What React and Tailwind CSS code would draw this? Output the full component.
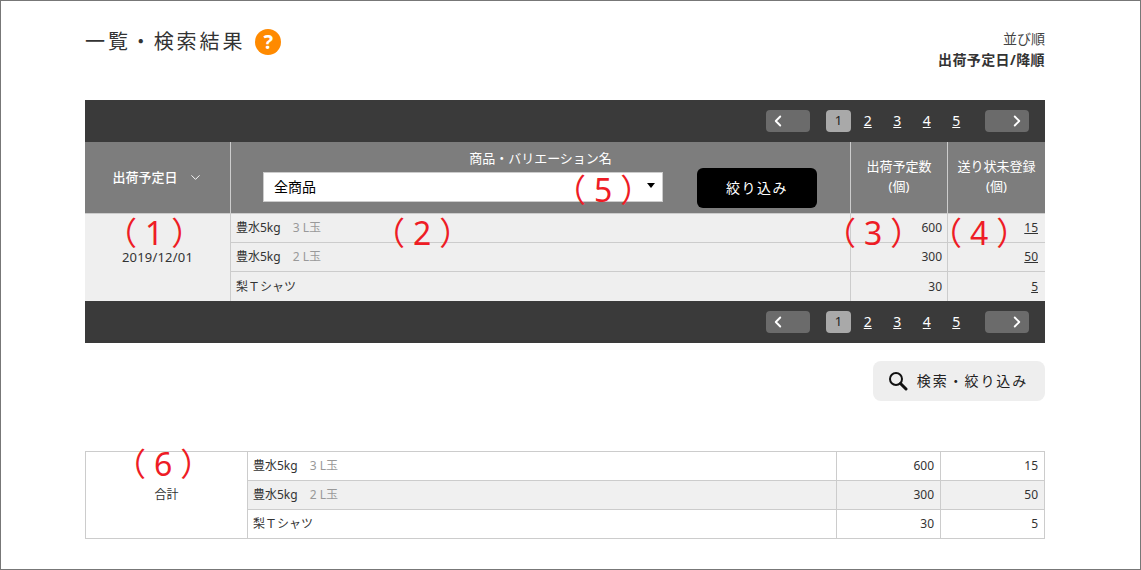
import { ChevronDown, ChevronLeft, ChevronRight } from 'lucide-react';

const font = "font-['Noto_Sans','Noto_Sans_CJK_JP',sans-serif]";

const rows = [
  { name: '豊水5kg', variant: '3 L玉', qty: '600', pending: '15' },
  { name: '豊水5kg', variant: '2 L玉', qty: '300', pending: '50' },
  { name: '梨Ｔシャツ', variant: '', qty: '30', pending: '5' },
];

// red annotation numbers laid over the screenshot
const Note = ({ className, children }) => (
  <span className={`absolute text-[32px] leading-none tracking-[8px] whitespace-nowrap text-[#ee1c25] ${className}`}>
    （{children}）
  </span>
);

const Pager = () => (
  <div className="h-[42px] bg-[#3a3a3a] flex items-center justify-end pr-4">
    <button className="w-11 h-[22px] rounded bg-[#6b6b6b] flex items-center pl-[3px] text-white">
      <ChevronLeft size={18} strokeWidth={2.5} />
    </button>
    <div className="w-[25px] h-[22px] ml-4 mr-[2px] rounded bg-[#a9a9a9] flex items-center justify-center text-[13px] text-[#222]">1</div>
    {['2', '3', '4', '5'].map((n) => (
      <a key={n} className="w-[29.5px] text-center text-sm leading-none text-white underline">{n}</a>
    ))}
    <button className="w-11 h-[22px] ml-[14px] rounded bg-[#6b6b6b] flex items-center justify-end pr-[3px] text-white">
      <ChevronRight size={18} strokeWidth={2.5} />
    </button>
  </div>
);

const App = () => {
  return (
    <div className={`${font} relative w-[1141px] h-[570px] border border-[#777] bg-white text-[#333] overflow-hidden`}>
      <div className="w-[960px] ml-[84px]">
        <div className="h-[99px] flex justify-between">
          <div className="flex items-start pt-[27px]">
            <h1 className="text-[20px] leading-7 tracking-[2.9px] font-normal text-[#333]">一覧・検索結果</h1>
            <span className="w-[26px] h-[26px] ml-[10px] mt-[1px] rounded-full bg-[#ff8a00] flex items-center justify-center text-white text-[20px] font-bold">?</span>
          </div>
          <div className="pt-7 text-right">
            <div className="text-sm leading-[19px] text-[#444]">並び順</div>
            <div className="text-sm leading-[23px] tracking-[0.4px] font-bold text-[#333]">出荷予定日/降順</div>
          </div>
        </div>

        <Pager />

        <div className="h-[72px] flex bg-[#7d7d7d] text-white text-[13px] border-b border-[#ccc]">
          <div className="w-[146px] flex items-center justify-center gap-[10px] border-r border-[#ccc] font-medium">
            出荷予定日
            <ChevronDown size={15} strokeWidth={1.5} />
          </div>
          <div className="w-[620px] border-r border-[#ccc] pt-[7px]">
            <div className="text-center leading-[18px]">商品・バリエーション名</div>
            <div className="flex items-start">
              <div className="w-[400px] h-[30px] ml-[32px] mt-[5px] bg-white border border-[#ccc] flex items-center justify-between pl-[10px] pr-[7px] text-sm text-black">
                全商品
                <span className="w-0 h-0 mb-1 border-x-4 border-t-[5px] border-x-transparent border-t-black"></span>
              </div>
              <button className="w-[120px] h-10 ml-[34px] mt-[1px] rounded-md bg-black text-white text-sm tracking-[1.5px] flex items-center justify-center">絞り込み</button>
            </div>
          </div>
          <div className="w-[97px] border-r border-[#ccc] text-center pt-[14px] leading-5">
            <div>出荷予定数</div>
            <div>(個)</div>
          </div>
          <div className="w-[97px] text-center pt-[14px] leading-5">
            <div>送り状未登録</div>
            <div>(個)</div>
          </div>
        </div>

        <div className="flex bg-[#efefef] text-xs text-[#333]">
          <div className="w-[146px] pt-[35px] text-center text-[13px] tracking-[0.2px] border-r border-[#ccc]">2019/12/01</div>
          <div className="flex-1">
            {rows.map((r, i) => (
              <div key={i} className={`h-[29px] flex items-center ${i < 2 ? 'border-b border-[#ccc]' : ''}`}>
                <div className="w-[620px] pl-[5px] border-r border-[#ccc] h-full flex items-center">
                  {r.name}
                  {r.variant && <span className="ml-3 text-[#999]">{r.variant}</span>}
                </div>
                <div className="w-[97px] pr-[5px] h-full flex items-center justify-end border-r border-[#ccc]">{r.qty}</div>
                <div className="flex-1 pr-[7px] h-full flex items-center justify-end underline">{r.pending}</div>
              </div>
            ))}
          </div>
        </div>

        <Pager />

        <div className="flex justify-end mt-[18px]">
          <button className="w-[172px] h-10 pr-[2px] rounded-lg bg-[#eee] flex items-center justify-center gap-[9px] text-sm tracking-[1.9px] text-[#222]">
            <svg width="20" height="20" viewBox="0 0 20 20" fill="none" stroke="#111">
              <circle cx="8" cy="8" r="6" strokeWidth="2" />
              <path d="M12.5 12.5 L18 18" strokeWidth="3" strokeLinecap="round" />
            </svg>
            検索・絞り込み
          </button>
        </div>

        <div className="mt-[50px] flex border border-[#ccc] text-xs text-[#333]">
          <div className="w-[162px] pt-[35px] text-center border-r border-[#ccc]">合計</div>
          <div className="flex-1">
            {rows.map((r, i) => (
              <div key={i} className={`flex ${i < 2 ? 'h-[29px] border-b border-[#ccc]' : 'h-7'} ${i === 1 ? 'bg-[#f0f0f0]' : ''}`}>
                <div className="w-[589px] pl-[5px] border-r border-[#ccc] flex items-center">
                  {r.name}
                  {r.variant && <span className="ml-3 text-[#999]">{r.variant}</span>}
                </div>
                <div className="w-[104px] pr-[6px] flex items-center justify-end border-r border-[#ccc]">{r.qty}</div>
                <div className="flex-1 pr-[6px] flex items-center justify-end">{r.pending}</div>
              </div>
            ))}
          </div>
        </div>
      </div>

      <Note className="left-[104px] top-[216px]">1</Note>
      <Note className="left-[372px] top-[216px]">2</Note>
      <Note className="left-[823px] top-[216px]">3</Note>
      <Note className="left-[929px] top-[216px]">4</Note>
      <Note className="left-[553px] top-[173px]">5</Note>
      <Note className="left-[113px] top-[447px]">6</Note>
    </div>
  );
};

export default App;
